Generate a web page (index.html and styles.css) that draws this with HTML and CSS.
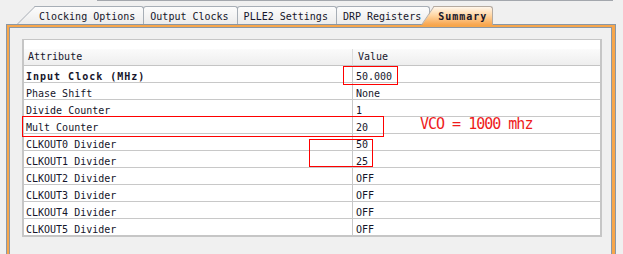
FILE: index.html
```html
<!DOCTYPE html>
<html lang="en">
<head>
  <meta charset="UTF-8">
  <title>Clocking Wizard - Summary</title>
  <link rel="stylesheet" href="styles.css">
</head>
<body>
  <div class="topline"></div>

  <div class="tabs">
    <div class="tab tab-first">Clocking Options</div>
    <div class="tab">Output Clocks</div>
    <div class="tab">PLLE2 Settings</div>
    <div class="tab">DRP Registers</div>
    <div class="tab tab-active">Summary</div>
  </div>

  <div class="panel">
    <div class="panel-frame">
      <div class="panel-body">
        <div class="grid">
          <table class="attrs">
            <thead>
              <tr><th class="col-name">Attribute</th><th class="col-value">Value</th></tr>
            </thead>
            <tbody>
              <tr class="row-bold"><td class="col-name">Input Clock (MHz)</td><td class="col-value">50.000</td></tr>
              <tr><td class="col-name">Phase Shift</td><td class="col-value">None</td></tr>
              <tr><td class="col-name">Divide Counter</td><td class="col-value">1</td></tr>
              <tr><td class="col-name">Mult Counter</td><td class="col-value">20</td></tr>
              <tr><td class="col-name">CLKOUT0 Divider</td><td class="col-value">50</td></tr>
              <tr><td class="col-name">CLKOUT1 Divider</td><td class="col-value">25</td></tr>
              <tr><td class="col-name">CLKOUT2 Divider</td><td class="col-value">OFF</td></tr>
              <tr><td class="col-name">CLKOUT3 Divider</td><td class="col-value">OFF</td></tr>
              <tr><td class="col-name">CLKOUT4 Divider</td><td class="col-value">OFF</td></tr>
              <tr><td class="col-name">CLKOUT5 Divider</td><td class="col-value">OFF</td></tr>
            </tbody>
          </table>
        </div>
      </div>
    </div>
  </div>

  <!-- red hand-drawn annotations on top of the screenshot -->
  <div class="mark mark-input"></div>
  <div class="mark mark-mult"></div>
  <div class="mark mark-clkout"></div>
  <div class="note">VCO = 1000 mhz</div>
</body>
</html>
```

FILE: styles.css
```css
body {
  margin: 0;
  background: #f0f0f0;
  font-family: "DejaVu Sans Mono", "Liberation Mono", monospace;
  font-size: 10px;
  color: #15152a;
  overflow: hidden;
}

.topline {
  margin-left: 97px;
  width: 516px;
  border-top: 1px solid #a3a7ad;
}

/* tab strip */
.tabs {
  display: flex;
  align-items: flex-start;
  height: 18px;
  margin-top: 5px;
  padding-left: 35px;
  position: relative;
  z-index: 1;
}

.tab {
  position: relative;
  z-index: 1;
  box-sizing: border-box;
  height: 18px;
  padding: 2px 8px 0 6px;
  line-height: 15px;
  white-space: nowrap;
  border: 1px solid #a7aeb6;
  border-bottom: none;
  border-radius: 3px 3px 0 0;
  margin-left: -1px;
  background: linear-gradient(#fcfcfc, #ececec);
}

.tab-first {
  margin-left: 0;
  padding-left: 4px;
  border-left: none;
  border-top-left-radius: 0;
}

.tab-first::before,
.tab-active::before {
  content: "";
  position: absolute;
  top: -1px;
  bottom: 0;
  left: -18px;
  width: 30px;
  border-top: 1px solid #a7aeb6;
  border-left: 1px solid #a7aeb6;
  background: linear-gradient(#fcfcfc, #ececec);
  transform: skewX(-45deg);
  transform-origin: left bottom;
  z-index: -1;
}

.tab-active {
  z-index: 2;
  height: 19px;
  margin-left: 4px;
  padding: 2px 5px 0 4px;
  border-left: none;
  border-top-left-radius: 0;
  border-color: #b4aaa0;
  font-weight: bold;
  letter-spacing: 1px;
  background: linear-gradient(#fff6ea, #ffd7a6 45%, #f8a54d);
}

.tab-active::before {
  left: -13px;
  width: 24px;
  border-color: #b4aaa0;
  transform: skewX(-34deg);
  background: linear-gradient(#fff6ea, #ffd7a6 45%, #f8a54d);
}

/* orange framed page */
.panel {
  margin-left: 6px;
  width: 610px;
  box-sizing: border-box;
  border: 1px solid #8b97a4;
  border-bottom: none;
}

.panel-frame {
  border-style: solid;
  border-color: #f7a64b;
  border-width: 2px 3px 0 2px;
}

.panel-body {
  border: 1px solid #8b97a4;
  border-bottom: none;
  padding: 11px 9px 17px 12px;
}

/* attribute table */
.grid {
  background: #fff;
  border: 2px solid #c6c6c6;
  border-top-width: 1px;
  padding-top: 9px;
}

.attrs {
  width: 100%;
  border-collapse: separate;
  border-spacing: 0;
  table-layout: fixed;
}

.attrs th {
  height: 16px;
  padding: 0 0 0 4px;
  line-height: 16px;
  text-align: left;
  font-weight: normal;
  background: linear-gradient(#fbfbfb, #eeeeee);
  border-bottom: 1px solid #c4c4c4;
}

.attrs th.col-value {
  padding-left: 5px;
  border-left: 1px solid #dcdcdc;
}

.attrs .col-name {
  width: 328px;
  box-sizing: border-box;
}

.attrs td {
  height: 16px;
  box-sizing: border-box;
  padding: 6px 0 0 2px;
  line-height: 10px;
  white-space: nowrap;
  border-bottom: 1px solid #c8c8c8;
}

.attrs td.col-value {
  padding-left: 3px;
  border-left: 1px solid #c8c8c8;
}

.attrs tr:last-child td {
  border-bottom: none;
}

.row-bold .col-name {
  font-weight: bold;
  letter-spacing: 1px;
}

/* annotations */
.mark {
  position: absolute;
  border: 1px solid #f00;
}

.mark-input {
  left: 343px;
  top: 66px;
  width: 53px;
  height: 17px;
}

.mark-mult {
  left: 22px;
  top: 116px;
  width: 360px;
  height: 19px;
}

.mark-clkout {
  left: 309px;
  top: 139px;
  width: 62px;
  height: 26px;
}

.note {
  position: absolute;
  left: 420px;
  top: 114px;
  font-size: 15px;
  letter-spacing: -1px;
  line-height: 20px;
  color: #ee1c1c;
  white-space: nowrap;
}
```
